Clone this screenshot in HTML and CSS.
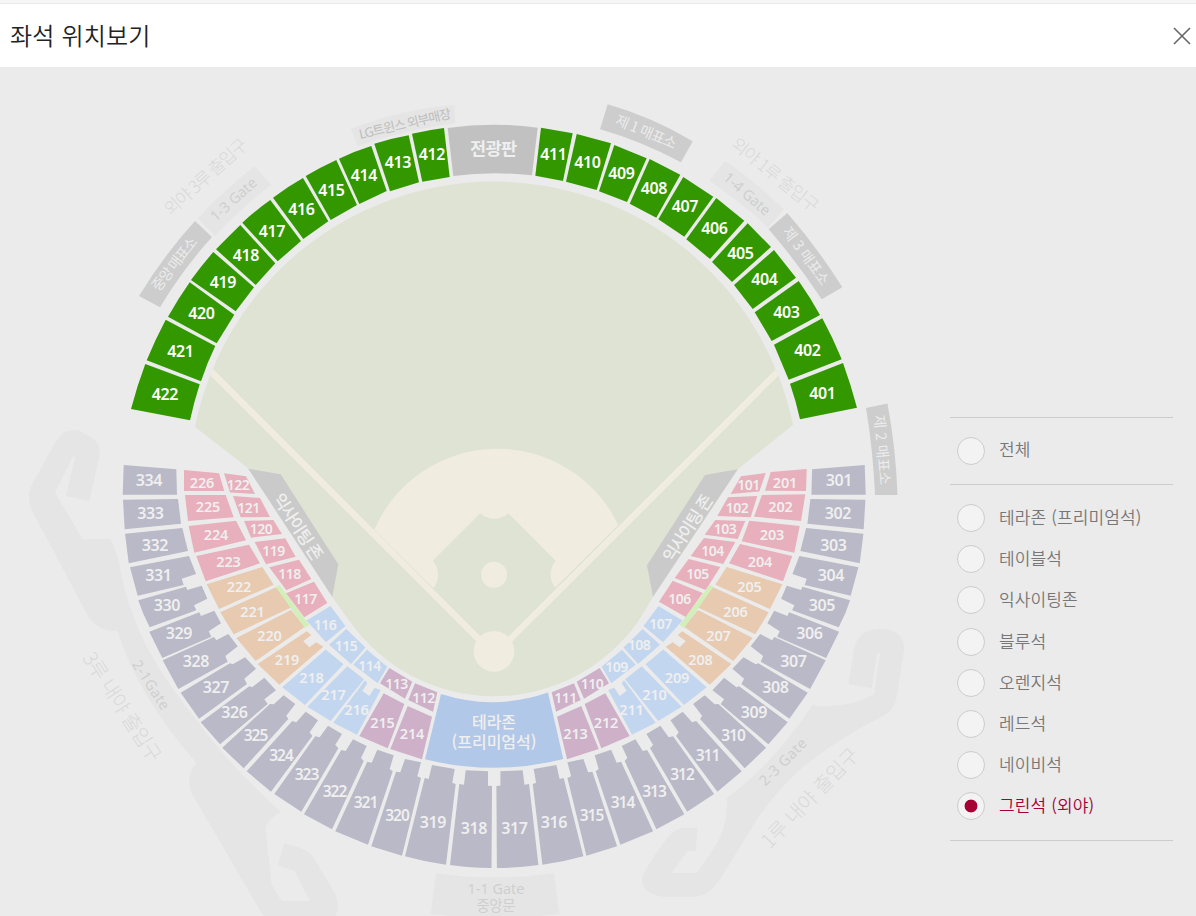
FILE: index.html
```html
<!DOCTYPE html>
<html lang="ko">
<head>
<meta charset="utf-8">
<title>좌석 위치보기</title>
<link rel="stylesheet" href="styles.css">
</head>
<body>
<header class="topbar">
  <h1 class="title">좌석 위치보기</h1>
  <button class="close" type="button" aria-label="닫기">
    <svg width="18" height="18" viewBox="0 0 18 18"><path d="M1 1L17 17M17 1L1 17"/></svg>
  </button>
</header>
<main class="content">
<svg class="map" width="940" height="849" viewBox="0 67 940 849">
  <defs><clipPath id="fieldClip"><path d="M195 427A305.1 305.1 0 0 1 793 425L738 469L653 597L638 621.7A176.5 176.5 0 0 1 350 621.7L332 597L248 468Z"/></clipPath></defs>

  <!-- access ramps -->
  <g class="ramp">
    <path transform="translate(0 410) scale(.33333)" d="M165 98Q192 52 238 62L282 88Q302 105 299 135L268 273L198 258L225 142Q222 132 215 147L165 248L248 388L330 386Q355 430 362 485Q385 600 440 710Q500 820 590 930Q690 1070 843 1205Q800 1230 797 1255L815 1425L845 1473L930 1473L883 1382L834 1366L852 1300L900 1314Q932 1325 945 1350L1005 1450Q1020 1480 1008 1518L790 1518L575 1150Q555 1095 590 1060Q415 860 352 662Q300 668 265 620L95 300Q80 270 92 230Z"/>
    <path transform="translate(630 600) scale(.33333)" d="M655 253L672 150Q682 88 750 87Q825 88 822 150L802 280Q798 325 765 345Q640 405 520 500Q440 570 380 660L275 830Q240 890 190 890L100 890Q30 880 38 830Q42 810 100 730Q130 683 165 683L203 683L197 753L173 753L124 819L200 819L240 763Q298 680 290 595Q440 480 547 315Q650 330 732 282L750 162Q746 152 740 167L725 265Z"/>
    <path d="M436 873Q494 882 554 873L559.3 914Q494 922 430.7 914Z"/>
    <path d="M351 128.7Q398 110 454.3 104.7L455.3 123.3Q404 130 357.7 146Z"/>
    <path d="M197.7 218.3Q224 190 254.7 166.3L271.3 184.7Q240 209 215.3 236Z"/>
    <path d="M725.3 160.7Q756 182 783.7 209.3L768 227.7Q740 201 709.3 180.7Z"/>
  </g>
  <g class="booth">
    <path d="M139 296Q164 255 195 221L212 237Q183 269 160 307.3Z"/>
    <path d="M607.7 104.3Q652 117 692.7 141.3L681 162.3Q641 141 600 129.3Z"/>
    <path d="M787.3 213Q817 247 842.3 287.3L821.7 299.3Q797 262 768.7 229.3Z"/>
    <path d="M866 408L887.5 403.5Q896 450 897.5 495L875 495Q873 450 866 408Z"/>
  </g>

  <!-- playing field -->
  <g clip-path="url(#fieldClip)">
    <rect class="grass" x="180" y="170" width="630" height="540"/>
    <path class="dirt" d="M374.3 529.7A134 134 0 0 1 618.3 525L494 648Z"/>
    <path class="grass" d="M480.3 513.3A20.8 20.8 0 0 0 508.3 513.3L555.7 560.7A20.8 20.8 0 0 0 556.3 588.7L494 650L432.7 588.7A20.8 20.8 0 0 0 432.7 560.7Z"/>
    <path class="foul" d="M200 360.5L490 650.5M790 359.5L498 651.5"/>
    <circle class="dirt" cx="494" cy="651.3" r="20.4"/>
    <circle class="dirt" cx="494" cy="574.7" r="13"/>
  </g>
  <path class="wedge" d="M248.3 468.7L280.7 474.3L338.3 564.3L332.3 596.7Z"/>
  <path class="wedge" d="M737.7 469.3L705 475L647 565.3L653 596.7Z"/>

  <!-- outfield seats -->
  <path class="board" d="M447.7 128Q492 121.5 537.7 127.7L532 175.3Q492 171 453.3 176Z"/>
  <g class="green">
    <path d="M145.3 364L199.7 384.3Q194 402 190 420.3L131 409Q137 386 145.3 364Z"/>
    <path d="M165.7 319.7L215.3 346Q207 363 201 381.3L146.7 360.3Q155 340 165.7 319.7Z"/>
    <path d="M189.7 282.3L234.3 314.7L216.7 343.3L168 316.7Q178 299 189.7 282.3Z"/>
    <path d="M213.3 252L254 287.3L235.7 311.3L191 280Q202 265 213.3 252Z"/>
    <path d="M240.3 225L275.3 263.3L255.7 285L216 249.3Q228 237 240.3 225Z"/>
    <path d="M270.3 200L301 241L277.7 261.3L242.3 222.7Q256 210 270.3 200Z"/>
    <path d="M303 178L328.3 221.3L303.3 239L273 197.7Q287 187 303 178Z"/>
    <path d="M336.3 160L357 205L330.7 220L305.7 176Q321 167 336.3 160Z"/>
    <path d="M371.3 146L386.7 191L359.3 204L339 158.7Q355 151 371.3 146Z"/>
    <path d="M408.7 135.3L419 182.3L390 191.3L374.3 143.7Q391 138.5 408.7 135.3Z"/>
    <path d="M444 128L449.7 177L422.3 181.7L412 133.7Q428 130 444 128Z"/>
    <path d="M541 127.7L572.7 133.3L563 181L535.3 175.7Z"/>
    <path d="M576.7 134L611 143.3L596.7 190L566 181.7Z"/>
    <path d="M614.3 145L646.7 158.3L627 202L599 191.3Z"/>
    <path d="M649.7 159L680.3 174.7L656.3 217.7L629.7 203.7Z"/>
    <path d="M683.3 177L713.3 196.7L684.3 236.7L658.3 219.3Z"/>
    <path d="M716.3 198L744.3 220.7L710 259L686.3 239.3Z"/>
    <path d="M747.7 223.3L771 247L732 282L712 262Z"/>
    <path d="M774 250L796 277.7L752.7 309L734 285Z"/>
    <path d="M798.7 281Q810 297 820 315L771.7 341L754.7 312.3Z"/>
    <path d="M822.3 318.3Q833 338 841.7 359.3L788.7 379.7L774 344.7Z"/>
    <path d="M843 363Q851 385 857 407.7L800 419.3Q796 401 790 383.7Z"/>
  </g>

  <!-- third-base stands; the first-base side is their mirror image -->
  <g id="navyHalf" class="navy">
    <path d="M123.7 465L176.3 469.3L177 494.7H122.7Z"/>
    <path d="M123 499.7L178 499L181 523.7L124.7 529.3Z"/>
    <path d="M125 533.7L182.3 528L188 551L128.7 563.3Z"/>
    <path d="M130 567.3L189 556L196 574L181.7 578.7L183.7 585L137.7 595.7Z"/>
    <path d="M138.3 600.3L186 586.7L187.3 590L201.7 585.7L207.3 598.7L194 605.3L196.3 610.3L149.7 627.3L143 613Z"/>
    <path d="M149.3 631.7L199.3 612.3L201 616L214.3 610.7L221 623.3L208.7 631.3L211.3 636.7L162.3 658Z"/>
    <path d="M162.7 660.3L214 637L216.3 640.3L228.3 634L237.7 646.3L225.3 656L227.7 661.7L178.3 689Z"/>
    <path d="M180.7 692.7L230 663.3L232.7 664.3L245 657.3L256 668.7L244.3 678.7L247 684L199 718.7Z"/>
    <path d="M200.7 722.3L249.3 686.3L252 687.3L264.3 677.7L276 690.3L264.3 699.3L267.7 704L220 744.3Z"/>
    <path d="M222.3 747.7L270 704L273.7 704.3L283.7 695.3L295.3 704L286.3 715.7L288.3 719L243.7 768.3Z"/>
    <path d="M246.7 771.3L292.3 721L296.3 722.3L305.7 711.7L318 720.3L309.7 732.3L312.3 736L271 791.7Z"/>
    <path d="M274.3 794L315.3 736.3L319.7 737.3L328 725.7L342 734L335.3 744.7L338.3 748.3L301.3 811.7Z"/>
    <path d="M304 814.3L341.3 750L345.7 751L353 739.3L366.7 746L361 758L363.7 761L332 829.3Z"/>
    <path d="M335.3 831.3L367.3 761.7L371.7 762.7L377.3 749.7L393.7 755.3L389.7 769L392.7 771.3L368 844.7Z"/>
    <path d="M371.3 846.3L396 771.7L400.3 772.3L405 759L421 762.3L417.3 776.3L421 778L402 855.7Z"/>
    <path d="M405 856.3L424.7 778L428.7 779L432 765L454.7 769L452.3 782.7L455.7 784L446 864.7Q425 862 405 856.3Z"/>
    <path d="M450 865L459.3 784L464 784.7L465.7 770.3L488 771.3V785.7L492 786L491.5 868Q470 868 450 865Z"/>
  </g>
  <use href="#navyHalf" transform="translate(988.4 0) scale(-1 1)"/>
  <g class="red">
    <path d="M184 470L219 473.3L224.3 491H184Z"/>
    <path d="M185 495H225.7L233.7 517.3L188 521Z"/>
    <path d="M188.7 526L236 520.7L246 540.3L194.3 552.7Z"/>
    <path d="M196.3 556L249 544.7L260 563.3L205.7 581.3Z"/>
    <path d="M224 473.3L246 476.3L255 494L230 492.5Z"/>
    <path d="M233 496L260 498L270 517L240.7 517.3Z"/>
    <path d="M244 521L273.3 520L282 534L251 537.7Z"/>
    <path d="M254.7 542L285.3 538.3L295.7 556.7L266 564.3Z"/>
    <path d="M269.3 567.3L299 559.7L311.3 579L286.3 590.3Z"/>
    <path d="M286 593.3L314 581.7L327.3 603L304.3 617.3Z"/>
    <path d="M770.7 472L806.7 469L806 491L765 490.7Z"/>
    <path d="M762 495L805.3 494.3L801 521L754 516.7Z"/>
    <path d="M749.3 520.7L799.7 526L794.3 552.7L741.7 541.3Z"/>
    <path d="M740 544L792.3 556L783 581.3L729 563.3Z"/>
    <path d="M741 476.3L765.7 473L759.3 491.5L730.7 494Z"/>
    <path d="M728 497.3L757.3 496L750.7 517.3L717.3 516Z"/>
    <path d="M715.3 520L745.3 521L737.7 539L704.7 534.7Z"/>
    <path d="M704 538L735.3 542L723.3 564L690.7 556Z"/>
    <path d="M688.7 559L720.3 567L705.7 590L674.7 578Z"/>
    <path d="M672.7 580.7L702.7 593L685.7 617L659 601.7Z"/>
  </g>
  <g id="innerHalf">
    <g class="orange">
      <path d="M206.7 584.3L262.3 567L273.7 584.7L219 609Z"/>
      <path d="M220.3 612.3L276 587.3L291.7 607.3L233.7 634.3Z"/>
      <path d="M236.3 638L291 610L305 626.7L255.7 661Z"/>
      <path d="M257.7 664L306.7 631.3L311.3 635L303.3 641.3L309.3 647.3L316.3 642.3L323.3 646.7L279.3 684.7Z"/>
    </g>
    <g class="blue">
      <path d="M282.3 687.3L325.7 649.5L343.5 664.3L305 705Z"/>
      <path d="M307.3 706.7L347.3 666.3L364 679.3L330.7 721Z"/>
      <path d="M333.3 722.7L365 680.3L367.3 683.3L362.3 690.7L369.3 696L374.7 687.7L380.7 690L357 734.7Z"/>
      <path d="M306.5 620.5L330.5 606L345.5 626L326 642.3Z"/>
      <path d="M329 644.7L346.3 629L365.5 647.5L351 664Z"/>
      <path d="M367 649.7L387.3 666.7L377.7 683.3L353.3 664.7Z"/>
    </g>
    <g class="purple">
      <path d="M359.3 736L383.7 693.3L404.3 704L387.7 748.3Z"/>
      <path d="M390.3 749L407.7 706L432 716.7L422 759.3Z"/>
      <path d="M389.3 668L412.3 681.7L405 698.7L380 683.3Z"/>
      <path d="M415 683.3L437.3 692.3L433 711.7L408.3 700Z"/>
    </g>
    <path class="strip" d="M275.7 586.7L279.3 584.7L309.3 625L304.7 628Z"/>
  </g>
  <use href="#innerHalf" transform="translate(989 0) scale(-1 1)"/>
  <path class="terrace" d="M441 694Q494 711 548 692.5L563.3 759Q494 776.5 425 759.3Z"/>

  <g class="num on">
    <text x="165" y="399.5">422</text><text x="180.5" y="357">421</text><text x="201.5" y="319">420</text><text x="223" y="288">419</text><text x="246" y="261">418</text><text x="272" y="237">417</text><text x="301.5" y="214.5">416</text><text x="331.5" y="195.500">415</text><text x="364" y="181">414</text><text x="398" y="167.5">413</text><text x="432" y="159.500">412</text>
    <text x="553.5" y="159.500">411</text><text x="587.500" y="167.5">410</text><text x="621.5" y="179">409</text><text x="654" y="194">408</text><text x="685" y="212">407</text><text x="714.5" y="234">406</text><text x="740.5" y="258.5">405</text><text x="764.500" y="285">404</text><text x="786.500" y="318">403</text><text x="807.5" y="356">402</text><text x="822.5" y="399">401</text>
  </g>
  <g class="num">
    <text x="149" y="486">334</text><text x="150.500" y="518.5">333</text><text x="155" y="550.500">332</text><text x="158.500" y="580.500">331</text><text x="167" y="611">330</text><text x="179" y="639">329</text><text x="196" y="667">328</text><text x="216" y="693">327</text><text x="234.500" y="717.500">326</text>
    <text x="839" y="486">301</text><text x="838" y="518.5">302</text><text x="833.500" y="550.500">303</text><text x="831" y="580.500">304</text><text x="822" y="611">305</text><text x="809.500" y="639">306</text><text x="793.500" y="667">307</text><text x="775.500" y="693">308</text><text x="754" y="717.500">309</text>
    <text x="433" y="827.500">319</text><text x="474" y="833.500">318</text><text x="514.500" y="833.500">317</text><text x="554" y="827.500">316</text>
  </g>
  <g class="num tight">
    <text x="255.500" y="741">325</text><text x="281" y="761">324</text><text x="306.500" y="780">323</text><text x="334.500" y="797">322</text><text x="365.500" y="808">321</text><text x="397" y="820.500">320</text>
    <text x="733" y="741">310</text><text x="707.500" y="761">311</text><text x="682" y="780">312</text><text x="654" y="797">313</text><text x="622.500" y="808">314</text><text x="591.500" y="820.500">315</text>
  </g>
  <g class="num mid">
    <text x="202" y="487.500">226</text><text x="208" y="512">225</text><text x="216" y="540">224</text><text x="228.500" y="566.500">223</text><text x="239" y="592">222</text><text x="252.500" y="616.500">221</text><text x="269.500" y="640.500">220</text><text x="287" y="665">219</text><text x="311.500" y="683">218</text><text x="333.500" y="700">217</text><text x="356.500" y="714.500">216</text><text x="382.500" y="728">215</text><text x="412" y="739">214</text>
    <text x="785" y="487.500">201</text><text x="780.500" y="512">202</text><text x="772" y="540">203</text><text x="760" y="566.500">204</text><text x="749.500" y="592">205</text><text x="735.500" y="616.500">206</text><text x="718.500" y="640.500">207</text><text x="700.500" y="665">208</text><text x="677" y="683">209</text><text x="654.500" y="700">210</text><text x="631.500" y="714.500">211</text><text x="606" y="728">212</text><text x="575.500" y="739">213</text>
  </g>
  <g class="num small">
    <text x="238" y="490">122</text><text x="248.500" y="513">121</text><text x="261" y="534">120</text><text x="273.500" y="555.500">119</text><text x="289.500" y="579">118</text><text x="305.500" y="603.500">117</text><text x="325" y="629.500">116</text><text x="346" y="651">115</text><text x="369.500" y="671">114</text><text x="396.500" y="689">113</text><text x="423.500" y="702.500">112</text>
    <text x="748.500" y="490">101</text><text x="737" y="513">102</text><text x="725" y="534">103</text><text x="712.500" y="555.500">104</text><text x="697.500" y="579">105</text><text x="679.500" y="603.500">106</text><text x="660.500" y="628.500">107</text><text x="639" y="650">108</text><text x="616.500" y="672">109</text><text x="592" y="689">110</text><text x="565.500" y="702.500">111</text>
  </g>

  <text class="lbl-board" x="493.500" y="154.500" textLength="47">전광판</text>
  <text class="lbl-terrace" x="494" y="728" textLength="44">테라존</text>
  <text class="lbl-terrace" x="494" y="748" textLength="85">(프리미엄석)</text>
  <text class="lbl-wedge" transform="translate(298 527) rotate(57)" y="6" textLength="76">익사이팅 존</text>
  <text class="lbl-wedge" transform="translate(688 528) rotate(-57)" y="6" textLength="76">익사이팅 존</text>

  <g class="lbl-booth">
    <text transform="translate(174.500 264) rotate(-52)" y="5" textLength="64">중앙 매표소</text>
    <text transform="translate(646 132) rotate(23)" y="5" textLength="65">제 1 매표소</text>
    <text transform="translate(806 256) rotate(54)" y="5" textLength="68">제 3 매표소</text>
    <text transform="translate(882 450) rotate(85)" y="5" textLength="70">제 2 매표소</text>
  </g>
  <g class="lbl-gate">
    <text class="shop" transform="translate(405 124) rotate(-13)" y="4.500" textLength="94">LG트윈스 외부매장</text>
    <text transform="translate(233.500 199.500) rotate(-42)" y="5" textLength="57">1-3 Gate</text>
    <text transform="translate(747 194) rotate(41)" y="5" textLength="57">1-4 Gate</text>
    <text transform="translate(151 685) rotate(57)" y="5" textLength="56">2-1Gate</text>
    <text transform="translate(783 762) rotate(-45)" y="5" textLength="60">2-3 Gate</text>
    <text x="496" y="893.500" textLength="57">1-1 Gate</text>
    <text x="496" y="911" textLength="39">중앙문</text>
  </g>
  <g class="lbl-exit">
    <text transform="translate(206 177) rotate(-42)" y="6" textLength="105">외야 3루 출입구</text>
    <text transform="translate(775 175) rotate(39)" y="6" textLength="106">외야 1루 출입구</text>
    <text class="infield" transform="translate(122 707) rotate(57)" y="7" textLength="126">3루 내야 출입구</text>
    <text class="infield" transform="translate(810 798) rotate(-46)" y="7" textLength="130">1루 내야 출입구</text>
  </g>
</svg>
<form class="filter">
  <label class="option all"><input type="radio" name="zone"><span>전체</span></label>
  <div class="zones">
    <label class="option"><input type="radio" name="zone"><span>테라존 (프리미엄석)</span></label>
    <label class="option"><input type="radio" name="zone"><span>테이블석</span></label>
    <label class="option"><input type="radio" name="zone"><span>익사이팅존</span></label>
    <label class="option"><input type="radio" name="zone"><span>블루석</span></label>
    <label class="option"><input type="radio" name="zone"><span>오렌지석</span></label>
    <label class="option"><input type="radio" name="zone"><span>레드석</span></label>
    <label class="option"><input type="radio" name="zone"><span>네이비석</span></label>
    <label class="option"><input type="radio" name="zone" checked><span>그린석 (외야)</span></label>
  </div>
</form>
</main>
</body>
</html>
```
FILE: styles.css
```css
* { box-sizing: border-box; }
body {
  margin: 0;
  height: 916px;
  overflow: hidden;
  background: #ebebeb;
  font-family: "Noto Sans CJK KR", "Noto Sans", sans-serif;
}
.topbar {
  display: flex;
  align-items: center;
  justify-content: space-between;
  height: 67px;
  padding: 2px 5px 0 10px;
  border-top: 3px solid #f6f6f6;
  background: #fff;
  box-shadow: inset 0 1px #e9e9e9;
}
.title {
  margin: -3px 0 0;
  color: #222;
  font-size: 24px;
  font-weight: 350;
  line-height: 36px;
  letter-spacing: .2px;
}
.close { display: flex; padding: 0; border: 0; background: none; }
.close path { fill: none; stroke: #666; stroke-width: 1.6; }
.content { display: flex; height: 849px; }
.map { flex: none; display: block; }

.ramp { fill: #e5e5e5; }
.booth { fill: #cdcdcd; }
.grass { fill: #dfe3d3; }
.dirt { fill: #f0ece0; }
.foul { fill: none; stroke: #f0ece0; stroke-width: 6.4; }
.wedge { fill: #cacaca; }
.board { fill: #c1c1c1; }
.green { fill: #339800; }
.navy { fill: #b9b9c7; }
.red { fill: #e8b0bc; }
.orange { fill: #e7cab0; }
.blue { fill: #c2d7ef; }
.purple { fill: #ceb0c9; }
.strip { fill: #d3efb9; }
.terrace { fill: #b1c8e8; }

.map text { text-anchor: middle; }
.num { font: 600 16px "Noto Sans", sans-serif; letter-spacing: -.4px; fill: #efefef; }
.num.on { fill: #fff; }
.num.tight { font-size: 15.5px; letter-spacing: -1.1px; }
.num.mid { font-size: 14.5px; letter-spacing: -.1px; }
.num.small { font-size: 14px; letter-spacing: -.5px; }
.lbl-board { font-size: 17.5px; font-weight: 700; fill: #efefef; }
.lbl-terrace { font-size: 16px; font-weight: 500; fill: #efefef; }
.lbl-wedge { font-size: 17px; font-weight: 500; fill: #efefef; }
.lbl-booth { font-size: 14.5px; fill: #ebebeb; }
.lbl-gate { font-size: 14.5px; font-family: "Noto Sans", "Noto Sans CJK KR", sans-serif; fill: #cfcfcf; }
.lbl-gate .shop { font-size: 13px; fill: #bdbdbd; }
.lbl-exit { font-size: 17.5px; font-weight: 300; fill: #d9d9d9; }
.lbl-exit .infield { font-size: 20px; }

.filter {
  width: 223px;
  height: 424px;
  margin: 350px 0 0 10px;
  border-top: 1px solid #ccc;
  border-bottom: 1px solid #ccc;
}
.option {
  display: flex;
  align-items: center;
  gap: 14px;
  height: 41.2px;
  padding-left: 7px;
  color: #777;
  font-size: 17px;
  font-weight: 350;
  letter-spacing: .12px;
}
.option span { line-height: 24px; margin-top: -2px; }
.option.all { height: 66px; padding-bottom: 1px; }
.option.all span { margin-top: -3px; }
.zones { padding-top: 12.5px; border-top: 1px solid #ccc; }
.option input {
  appearance: none;
  flex: none;
  width: 28px;
  height: 28px;
  margin: 0;
  border: 1px solid #ccc;
  border-radius: 50%;
  background: #f3f3f3;
}
.option input:checked {
  background: radial-gradient(circle at 13px 13px, #a50034 6px, #f3f3f3 6.8px);
}
.option:has(:checked) { color: #a50034; }
```
